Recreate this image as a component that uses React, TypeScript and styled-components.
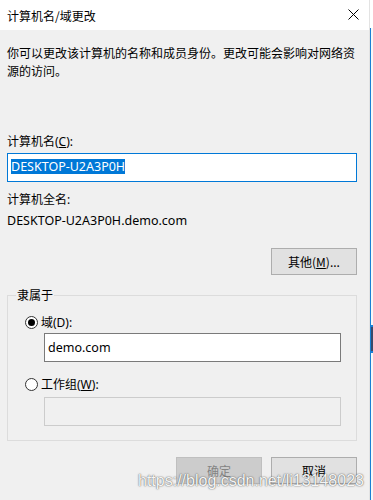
import React from 'react';
import styled, { createGlobalStyle } from 'styled-components';

const GlobalStyle = createGlobalStyle`
  html, body {
    margin: 0;
    padding: 0;
    background: #ffffff;
  }
  body {
    font-family: "Noto Sans", "Noto Sans CJK SC", sans-serif;
    font-size: 12px;
    color: #000000;
  }
`;

const Screen = styled.div`
  width: 373px;
  height: 500px;
  display: flex;
  overflow: hidden;
  position: relative;
`;

const Dialog = styled.div`
  width: 369px;
  display: flex;
  flex-direction: column;
`;

const Edge = styled.div`
  width: 4px;
  display: flex;
  flex-direction: column;
  border-left: 1px solid #e3e3e3;
  box-sizing: border-box;
  background: #f7f7f7;
`;

const EdgeTop = styled.div`
  height: 28px;
  background: #ffffff;
`;

const EdgeLine = styled.div`
  flex: 1;
  display: flex;
  flex-direction: column;
  border-left: 1px solid #1a7fd4;
  padding-top: 297px;
`;

const EdgeTab = styled.div`
  height: 24px;
  background: #3a4a6b;
  border-top: 2px solid #1a7fd4;
  border-bottom: 2px solid #1a7fd4;
`;

const TitleBar = styled.div`
  height: 30px;
  background: #ffffff;
  display: flex;
  align-items: center;
  justify-content: space-between;
  padding: 0 10px 0 7px;
  font-family: "Noto Sans CJK SC", sans-serif;
`;

const CloseIcon = styled.svg`
  width: 11px;
  height: 11px;
  margin-top: -2px;
`;

const Body = styled.div`
  flex: 1;
  background: #f0f0f0;
  padding: 14px 12px 0 7px;
  display: flex;
  flex-direction: column;
`;

const Text = styled.div<{ $top?: number; $size?: number }>`
  line-height: 18px;
  margin-top: ${(p) => p.$top ?? 0}px;
  font-size: ${(p) => p.$size ?? 12}px;
  white-space: nowrap;
`;

const Intro = styled.div`
  line-height: 18px;
  font-family: "Noto Sans CJK SC", sans-serif;
`;

const Field = styled.div<{ $top: number; $variant?: 'focus' | 'normal' | 'disabled'; $indent?: number }>`
  box-sizing: border-box;
  height: 29px;
  margin-top: ${(p) => p.$top}px;
  margin-left: ${(p) => p.$indent ?? 0}px;
  padding: 0 3px;
  display: flex;
  align-items: center;
  background: ${(p) => (p.$variant === 'disabled' ? '#f0f0f0' : '#ffffff')};
  border: 1px solid
    ${(p) =>
      p.$variant === 'focus' ? '#0078d7' : p.$variant === 'disabled' ? '#cccccc' : '#7a7a7a'};
  font-size: 12.5px;
`;

const Selected = styled.span`
  background: #0078d7;
  color: #ffffff;
  line-height: 15px;
  margin-top: -2px;
`;

const Actions = styled.div<{ $top: number }>`
  display: flex;
  justify-content: flex-end;
  gap: 9px;
  margin-top: ${(p) => p.$top}px;
`;

const Button = styled.div<{ $disabled?: boolean }>`
  box-sizing: border-box;
  width: 86px;
  height: 27px;
  display: flex;
  align-items: center;
  justify-content: center;
  background: ${(p) => (p.$disabled ? '#cccccc' : '#e1e1e1')};
  border: 1px solid ${(p) => (p.$disabled ? '#bfbfbf' : '#adadad')};
  color: ${(p) => (p.$disabled ? '#838383' : '#000000')};
  font-family: "Noto Sans CJK SC", sans-serif;
`;

const Group = styled.fieldset`
  margin: 11px 0 0 0;
  padding: 0 15px 14px 17px;
  border: 1px solid #dcdcdc;
  min-width: 0;
`;

const Legend = styled.legend`
  margin-left: -9px;
  padding: 0 1px;
  line-height: 18px;
  font-family: "Noto Sans CJK SC", sans-serif;
`;

const RadioRow = styled.div<{ $top: number }>`
  display: flex;
  align-items: center;
  gap: 3px;
  height: 18px;
  margin-top: ${(p) => p.$top}px;
`;

const Radio = styled.span<{ $checked?: boolean }>`
  box-sizing: border-box;
  width: 13px;
  height: 13px;
  border-radius: 50%;
  border: 1px solid #333333;
  background: #ffffff;
  display: flex;
  align-items: center;
  justify-content: center;
  &::after {
    content: '';
    width: 7px;
    height: 7px;
    border-radius: 50%;
    background: ${(p) => (p.$checked ? '#000000' : 'transparent')};
  }
`;

const Watermark = styled.div`
  position: absolute;
  left: 138px;
  top: 472px;
  font-family: "Liberation Sans", Arial, sans-serif;
  font-size: 16px;
  line-height: 18px;
  color: rgba(255, 255, 255, 0.95);
  text-shadow: 0 0 1px rgba(60, 60, 60, 0.8), 0 0 2px rgba(60, 60, 60, 0.5);
  white-space: nowrap;
`;

const App = () => {
  return (
    <Screen>
      <GlobalStyle />
      <Dialog>
        <TitleBar>
          <span>计算机名/域更改</span>
          <CloseIcon viewBox="0 0 11 11">
            <path d="M0.5 0.5 L10.5 10.5 M10.5 0.5 L0.5 10.5" stroke="#000" strokeWidth="1" fill="none" />
          </CloseIcon>
        </TitleBar>
        <Body>
          <Intro>你可以更改该计算机的名称和成员身份。更改可能会影响对网络资源的访问。</Intro>
          <Text $top={53}>
            计算机名(<u>C</u>):
          </Text>
          <Field $top={2} $variant="focus">
            <Selected>DESKTOP-U2A3P0H</Selected>
          </Field>
          <Text $top={9}>计算机全名:</Text>
          <Text $top={3} $size={12.5}>
            DESKTOP-U2A3P0H.demo.com
          </Text>
          <Actions $top={18}>
            <Button>
              其他(<u>M</u>)...
            </Button>
          </Actions>
          <Group>
            <Legend>隶属于</Legend>
            <RadioRow $top={9}>
              <Radio $checked />
              <span>域(D):</span>
            </RadioRow>
            <Field $top={2} $indent={19}>
              demo.com
            </Field>
            <RadioRow $top={13}>
              <Radio />
              <span>
                工作组(<u>W</u>):
              </span>
            </RadioRow>
            <Field $top={4} $indent={19} $variant="disabled" />
          </Group>
          <Actions $top={16}>
            <Button $disabled>确定</Button>
            <Button>取消</Button>
          </Actions>
        </Body>
      </Dialog>
      <Edge>
        <EdgeTop />
        <EdgeLine>
          <EdgeTab />
        </EdgeLine>
      </Edge>
      <Watermark>https://blog.csdn.net/li13148023</Watermark>
    </Screen>
  );
};

export default App;
